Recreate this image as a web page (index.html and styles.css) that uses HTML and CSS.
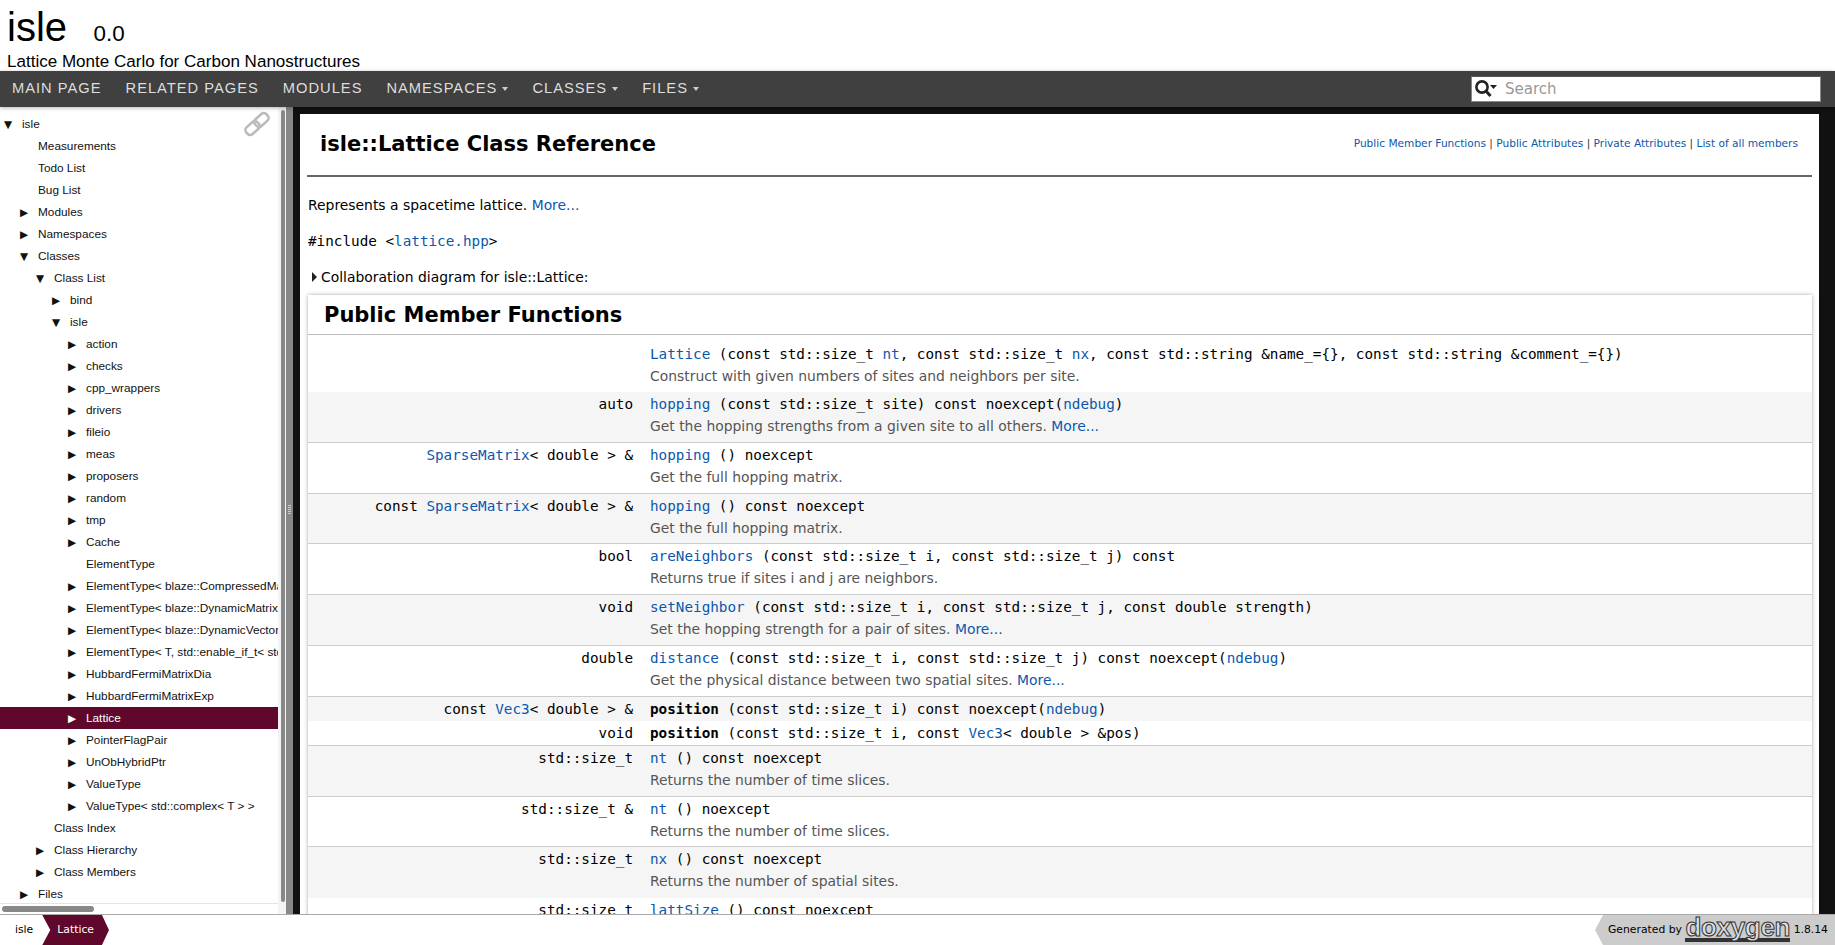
FILE: index.html
```html
<!DOCTYPE html>
<html lang="en">
<head>
<meta charset="UTF-8">
<meta name="viewport" content="width=device-width, initial-scale=1.0">
<title>isle: isle::Lattice Class Reference</title>
<link rel="stylesheet" href="styles.css">
</head>
<body>

<header class="top">
  <div class="project"><span class="project-name">isle</span><span class="project-number">0.0</span></div>
  <div class="project-brief">Lattice Monte Carlo for Carbon Nanostructures</div>
</header>

<nav class="menu">
  <ul class="menu-list">
    <li>Main Page</li>
    <li>Related Pages</li>
    <li>Modules</li>
    <li class="has-sub">Namespaces</li>
    <li class="has-sub">Classes</li>
    <li class="has-sub">Files</li>
  </ul>
  <div class="search">
    <svg class="search-icon" width="24" height="20" viewBox="0 0 24 20">
      <circle cx="8" cy="8" r="5.6" fill="none" stroke="#222" stroke-width="2.6"/>
      <path d="M12 12l4.5 5" stroke="#222" stroke-width="3" fill="none"/>
      <path d="M16 6h7l-3.5 4z" fill="#222"/>
    </svg>
    <input class="search-input" type="text" placeholder="Search">
  </div>
</nav>

<div class="main">
  <aside class="side">
    <div class="tree">
      <svg class="sync-icon" width="28" height="26" viewBox="0 0 28 26">
        <g fill="none" stroke="#bbb" stroke-width="2.6" transform="rotate(-42 14 13)">
          <rect x="0.5" y="8.5" width="15" height="9" rx="3.5"/>
          <rect x="12.5" y="8.5" width="15" height="9" rx="3.5"/>
        </g>
      </svg>
      <div class="row l0"><span class="arrow">▼</span>isle</div>
      <div class="row l1"><span class="arrow"></span>Measurements</div>
      <div class="row l1"><span class="arrow"></span>Todo List</div>
      <div class="row l1"><span class="arrow"></span>Bug List</div>
      <div class="row l1"><span class="arrow">▶</span>Modules</div>
      <div class="row l1"><span class="arrow">▶</span>Namespaces</div>
      <div class="row l1"><span class="arrow">▼</span>Classes</div>
      <div class="row l2"><span class="arrow">▼</span>Class List</div>
      <div class="row l3"><span class="arrow">▶</span>bind</div>
      <div class="row l3"><span class="arrow">▼</span>isle</div>
      <div class="row l4"><span class="arrow">▶</span>action</div>
      <div class="row l4"><span class="arrow">▶</span>checks</div>
      <div class="row l4"><span class="arrow">▶</span>cpp_wrappers</div>
      <div class="row l4"><span class="arrow">▶</span>drivers</div>
      <div class="row l4"><span class="arrow">▶</span>fileio</div>
      <div class="row l4"><span class="arrow">▶</span>meas</div>
      <div class="row l4"><span class="arrow">▶</span>proposers</div>
      <div class="row l4"><span class="arrow">▶</span>random</div>
      <div class="row l4"><span class="arrow">▶</span>tmp</div>
      <div class="row l4"><span class="arrow">▶</span>Cache</div>
      <div class="row l4"><span class="arrow"></span>ElementType</div>
      <div class="row l4"><span class="arrow">▶</span>ElementType&lt; blaze::CompressedMatrix&lt; ET, SO &gt; &gt;</div>
      <div class="row l4"><span class="arrow">▶</span>ElementType&lt; blaze::DynamicMatrix&lt; ET, SO &gt; &gt;</div>
      <div class="row l4"><span class="arrow">▶</span>ElementType&lt; blaze::DynamicVector&lt; ET, TF &gt; &gt;</div>
      <div class="row l4"><span class="arrow">▶</span>ElementType&lt; T, std::enable_if_t&lt; std::is_arithmetic &gt; &gt;</div>
      <div class="row l4"><span class="arrow">▶</span>HubbardFermiMatrixDia</div>
      <div class="row l4"><span class="arrow">▶</span>HubbardFermiMatrixExp</div>
      <div class="row l4 selected"><span class="arrow">▶</span>Lattice</div>
      <div class="row l4"><span class="arrow">▶</span>PointerFlagPair</div>
      <div class="row l4"><span class="arrow">▶</span>UnObHybridPtr</div>
      <div class="row l4"><span class="arrow">▶</span>ValueType</div>
      <div class="row l4"><span class="arrow">▶</span>ValueType&lt; std::complex&lt; T &gt; &gt;</div>
      <div class="row l2"><span class="arrow"></span>Class Index</div>
      <div class="row l2"><span class="arrow">▶</span>Class Hierarchy</div>
      <div class="row l2"><span class="arrow">▶</span>Class Members</div>
      <div class="row l1"><span class="arrow">▶</span>Files</div>
    </div>
    <div class="hscroll"><div class="hscroll-thumb"></div></div>
    <div class="vscroll"><div class="vscroll-thumb"></div></div>
  </aside>
  <div class="splitter"><div class="splitter-dots"></div></div>

  <div class="doc-wrap">
    <main class="doc">
      <div class="doc-header">
        <div class="doc-title">isle::Lattice Class Reference</div>
        <div class="summary"><a>Public Member Functions</a> | <a>Public Attributes</a> | <a>Private Attributes</a> | <a>List of all members</a></div>
      </div>
      <p class="brief">Represents a spacetime lattice. <a>More...</a></p>
      <p class="include">#include &lt;<a>lattice.hpp</a>&gt;</p>
      <p class="collab"><span class="collab-arrow"></span>Collaboration diagram for isle::Lattice:</p>

      <section class="members">
        <h2 class="members-title">Public Member Functions</h2>
        <table class="member-table">
          <tr class="first">
            <td class="left"></td>
            <td class="right"><a>Lattice</a> (const std::size_t <a>nt</a>, const std::size_t <a>nx</a>, const std::string &amp;name_={}, const std::string &amp;comment_={})<div class="desc">Construct with given numbers of sites and neighbors per site.</div></td>
          </tr>
          <tr class="alt sep">
            <td class="left">auto</td>
            <td class="right"><a>hopping</a> (const std::size_t site) const noexcept(<a>ndebug</a>)<div class="desc">Get the hopping strengths from a given site to all others. <a>More...</a></div></td>
          </tr>
          <tr class="sep">
            <td class="left"><a>SparseMatrix</a>&lt; double &gt; &amp;</td>
            <td class="right"><a>hopping</a> () noexcept<div class="desc">Get the full hopping matrix.</div></td>
          </tr>
          <tr class="alt sep">
            <td class="left">const <a>SparseMatrix</a>&lt; double &gt; &amp;</td>
            <td class="right"><a>hopping</a> () const noexcept<div class="desc">Get the full hopping matrix.</div></td>
          </tr>
          <tr class="sep">
            <td class="left">bool</td>
            <td class="right"><a>areNeighbors</a> (const std::size_t i, const std::size_t j) const<div class="desc">Returns true if sites i and j are neighbors.</div></td>
          </tr>
          <tr class="alt sep">
            <td class="left">void</td>
            <td class="right"><a>setNeighbor</a> (const std::size_t i, const std::size_t j, const double strength)<div class="desc">Set the hopping strength for a pair of sites. <a>More...</a></div></td>
          </tr>
          <tr class="sep">
            <td class="left">double</td>
            <td class="right"><a>distance</a> (const std::size_t i, const std::size_t j) const noexcept(<a>ndebug</a>)<div class="desc">Get the physical distance between two spatial sites. <a>More...</a></div></td>
          </tr>
          <tr class="alt short">
            <td class="left">const <a>Vec3</a>&lt; double &gt; &amp;</td>
            <td class="right"><b>position</b> (const std::size_t i) const noexcept(<a>ndebug</a>)</td>
          </tr>
          <tr class="short sep">
            <td class="left">void</td>
            <td class="right"><b>position</b> (const std::size_t i, const <a>Vec3</a>&lt; double &gt; &amp;pos)</td>
          </tr>
          <tr class="alt sep">
            <td class="left">std::size_t</td>
            <td class="right"><a>nt</a> () const noexcept<div class="desc">Returns the number of time slices.</div></td>
          </tr>
          <tr class="sep">
            <td class="left">std::size_t &amp;</td>
            <td class="right"><a>nt</a> () noexcept<div class="desc">Returns the number of time slices.</div></td>
          </tr>
          <tr class="alt last">
            <td class="left">std::size_t</td>
            <td class="right"><a>nx</a> () const noexcept<div class="desc">Returns the number of spatial sites.</div></td>
          </tr>
          <tr>
            <td class="left">std::size_t</td>
            <td class="right"><a>lattSize</a> () const noexcept<div class="desc">Returns the total lattice size.</div></td>
          </tr>
        </table>
      </section>
    </main>
    <div class="doc-scroll"></div>
  </div>
</div>

<footer class="bottom">
  <ul class="crumbs">
    <li class="crumb">isle</li>
    <li class="crumb current">Lattice</li>
  </ul>
  <div class="generated">Generated by <span class="doxy-logo">doxygen</span> 1.8.14</div>
</footer>

</body>
</html>
```

FILE: styles.css
```css
html, body {
  margin: 0;
  padding: 0;
  height: 100%;
  overflow: hidden;
}

body {
  display: flex;
  flex-direction: column;
  font-family: "DejaVu Sans", sans-serif;
  color: #000;
  background: #fff;
}

a {
  color: #0a58ad;
}

/* top header */
.top {
  height: 71px;
  padding-left: 7px;
  font-family: "Liberation Sans", sans-serif;
  flex: none;
  box-sizing: border-box;
}

.project {
  height: 53px;
  line-height: 54px;
}

.project-name {
  font-size: 40px;
}

.project-number {
  font-size: 22.4px;
  margin-left: 26.5px;
}

.project-brief {
  font-size: 17.05px;
  line-height: 18px;
}

/* nav */
.menu {
  height: 36px;
  background: #404040;
  display: flex;
  justify-content: space-between;
  align-items: center;
  flex: none;
  position: relative;
  z-index: 2;
  box-shadow: 0 1px 4px rgba(0, 0, 0, 0.3);
}

.menu-list {
  list-style: none;
  margin: 0;
  padding: 0;
  display: flex;
  font-family: "Liberation Sans", sans-serif;
  font-size: 14.7px;
  letter-spacing: 1px;
  text-transform: uppercase;
  color: #ddd;
}

.menu-list li {
  padding: 0 12px;
  line-height: 34px;
  height: 36px;
}

.menu-list li.has-sub::after {
  content: "";
  display: inline-block;
  border: 3.5px solid transparent;
  border-top: 4px solid #ccc;
  border-bottom: 0;
  margin-left: 5px;
  vertical-align: 2px;
}

.search {
  width: 350px;
  height: 26px;
  margin-right: 14px;
  background: #fff;
  border: 1px solid #888;
  border-top-color: #555;
  box-sizing: border-box;
  display: flex;
  align-items: center;
}

.search-icon {
  margin-left: 2px;
  flex: none;
}

.search-input {
  flex: 1;
  border: 0;
  outline: 0;
  margin-left: 7px;
  padding: 0;
  font-family: "DejaVu Sans", sans-serif;
  font-size: 15px;
  min-width: 0;
}

.search-input::placeholder {
  color: #999;
  opacity: 1;
}

/* main area */
.main {
  flex: 1;
  min-height: 0;
  display: flex;
  overflow: hidden;
}

.side {
  width: 286px;
  flex: none;
  position: relative;
  background: #f4f4f4;
}

.tree {
  width: 278px;
  height: 797px;
  box-sizing: border-box;
  padding-top: 6px;
  background: #fff;
  overflow: hidden;
  position: relative;
  font-family: "Liberation Sans", sans-serif;
  font-size: 11.8px;
  color: #111;
  border-bottom: 1px solid #e4e4e4;
}

.sync-icon {
  position: absolute;
  left: 243px;
  top: 4px;
}

.row {
  height: 22px;
  line-height: 22px;
  white-space: nowrap;
  overflow: hidden;
}

.row.selected {
  background: #5f082b;
  color: #fff;
}

.l0 { padding-left: 4px; }
.l1 { padding-left: 20px; }
.l2 { padding-left: 36px; }
.l3 { padding-left: 52px; }
.l4 { padding-left: 68px; }

.arrow {
  display: inline-block;
  width: 18px;
  font-family: "DejaVu Sans", sans-serif;
  font-size: 10.5px;
}

.hscroll {
  position: absolute;
  left: 0;
  bottom: 0;
  width: 278px;
  height: 10px;
  background: #fff;
}

.hscroll-thumb {
  position: absolute;
  left: 2px;
  top: 2px;
  width: 92px;
  height: 6px;
  border-radius: 3px;
  background: #888;
}

.vscroll-thumb {
  position: absolute;
  left: 281px;
  top: 3px;
  width: 4px;
  height: 792px;
  border-radius: 2px;
  background: #888;
}

.splitter {
  width: 7px;
  flex: none;
  background: #888;
  position: relative;
}

.splitter-dots {
  position: absolute;
  left: 2px;
  top: 398px;
  width: 3px;
  height: 9px;
  background: repeating-linear-gradient(#ccc 0 1px, transparent 1px 2px);
}

.doc-wrap {
  flex: 1;
  min-width: 0;
  background: #111;
  padding: 7px 0 0 7px;
  display: flex;
}

.doc {
  flex: 1;
  min-width: 0;
  background: #fff;
  padding: 0 7px;
  overflow: hidden;
}

.doc-scroll {
  width: 16px;
  flex: none;
}

.doc-header {
  height: 61px;
  box-sizing: content-box;
  border-bottom: 2px solid #666;
  display: flex;
  align-items: center;
  justify-content: space-between;
  padding: 0 14px 0 13px;
}

.doc-title {
  font-size: 21px;
  font-weight: bold;
  margin-bottom: 2px;
}

.summary {
  font-size: 10.6px;
  color: #333;
  margin-bottom: 3px;
}

.brief, .include, .collab {
  margin: 0;
  padding-left: 1px;
  font-size: 13.9px;
  line-height: 20px;
}

.brief {
  padding-top: 18px;
}

.include {
  font-family: "DejaVu Sans Mono", monospace;
  font-size: 14.3px;
  padding-top: 16px;
}

.collab {
  padding-top: 16px;
  padding-left: 5px;
  display: flex;
  align-items: center;
}

.collab-arrow {
  width: 0;
  height: 0;
  border: 5px solid transparent;
  border-left: 5px solid #222;
  border-right: 0;
  margin-right: 4px;
}

/* member table */
.members {
  margin: 8px 0 0 1px;
  box-shadow: 0 0 4px rgba(0, 0, 0, 0.35);
}

.members-title {
  margin: 0;
  height: 39px;
  line-height: 41px;
  padding-left: 16px;
  font-size: 21px;
  font-weight: bold;
  border-bottom: 1px solid #bbb;
}

.member-table {
  width: 100%;
  border-collapse: separate;
  border-spacing: 0;
  font-family: "DejaVu Sans Mono", monospace;
  font-size: 14.3px;
}

.member-table td {
  padding: 2px 0 0;
  height: 47.8px;
  line-height: 20px;
  vertical-align: top;
}

.member-table .left {
  width: 325px;
  text-align: right;
  white-space: nowrap;
}

.member-table .right {
  padding-left: 17px;
  white-space: nowrap;
}

.member-table tr.first td {
  padding-top: 9px;
  height: 48px;
}

.member-table tr.alt td {
  background: #f5f5f5;
}

.member-table tr.sep td {
  border-bottom: 1px solid #ccc;
}

.member-table tr.short td {
  height: 22px;
}

.member-table tr.last td {
  height: 49px;
}

.desc {
  font-family: "DejaVu Sans", sans-serif;
  font-size: 13.9px;
  color: #555;
  line-height: 22px;
  margin-top: 1px;
}

/* footer */
.bottom {
  height: 31px;
  flex: none;
  box-sizing: border-box;
  border-top: 1px solid #aaa;
  background: #fff;
  display: flex;
  justify-content: space-between;
  position: relative;
  z-index: 2;
}

.crumbs {
  list-style: none;
  margin: 0;
  padding: 0;
  display: flex;
  font-size: 10.8px;
  line-height: 30px;
}

.crumb {
  padding: 0 10px 0 15px;
}

.crumb.current {
  background: #5f082b;
  color: #fff;
  margin-left: -1px;
  padding: 0 15px;
  clip-path: polygon(0 0, calc(100% - 7px) 0, 100% 50%, calc(100% - 7px) 100%, 0 100%, 8px 50%);
}

.generated {
  width: 240px;
  box-sizing: border-box;
  background: #ccc;
  font-size: 10.8px;
  line-height: 30px;
  padding-left: 13px;
  white-space: nowrap;
  clip-path: polygon(0 50%, 8px 0, 100% 0, 100% 100%, 8px 100%);
}

.doxy-logo {
  display: inline-block;
  font-family: "Liberation Sans", sans-serif;
  font-size: 26px;
  font-weight: bold;
  line-height: 22px;
  height: 22px;
  vertical-align: -3px;
  letter-spacing: -0.3px;
  color: #ddd;
  -webkit-text-stroke: 1px #333;
  border-bottom: 4px solid #333;
}
```
